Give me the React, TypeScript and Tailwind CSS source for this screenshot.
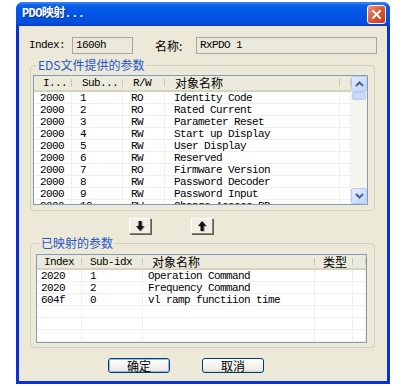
import React from "react";

const mono = "font-['Liberation_Mono',monospace] text-[11px] tracking-[-0.6px] text-black";
const cjk = "font-['Noto_Sans_CJK_SC',sans-serif] text-[12px]";

const rows1 = [
  ["2000", "1", "RO", "Identity Code"],
  ["2000", "2", "RO", "Rated Current"],
  ["2000", "3", "RW", "Parameter Reset"],
  ["2000", "4", "RW", "Start up Display"],
  ["2000", "5", "RW", "User Display"],
  ["2000", "6", "RW", "Reserved"],
  ["2000", "7", "RO", "Firmware Version"],
  ["2000", "8", "RW", "Password Decoder"],
  ["2000", "9", "RW", "Password Input"],
  ["2000", "10", "RW", "Change Access PD"],
];

const rows2 = [
  ["2020", "1", "Operation Command", ""],
  ["2020", "2", "Frequency Command", ""],
  ["604f", "0", "vl ramp functiion time", ""],
  ["", "", "", ""],
  ["", "", "", ""],
  ["", "", "", ""],
];

function HeadCell({ w, pl, children, cjkText }: { w: string; pl: string; children?: React.ReactNode; cjkText?: boolean }) {
  return (
    <div className={`${w} ${pl} h-full flex items-center relative shrink-0 overflow-hidden whitespace-nowrap`}>
      <span className={cjkText ? `${cjk} text-black leading-[14px]` : `${mono} leading-[14px]`}>{children}</span>
      <div className="absolute right-0 top-[3px] bottom-[3px] w-px bg-[#c9c6b4]" />
    </div>
  );
}

function Cell({ w, pl, children }: { w: string; pl: string; children?: React.ReactNode }) {
  return (
    <div className={`${w} ${pl} h-full flex items-center shrink-0 border-r border-[#f0efe9] overflow-hidden whitespace-nowrap`}>
      <span className={`${mono} leading-[12px]`}>{children}</span>
    </div>
  );
}

function Chevron({ up }: { up?: boolean }) {
  return (
    <svg width="9" height="6" viewBox="0 0 9 6">
      <path d={up ? "M1 5 L4.5 1.5 L8 5" : "M1 1 L4.5 4.5 L8 1"} fill="none" stroke="#4d6185" strokeWidth="2" />
    </svg>
  );
}

function ArrowBtn({ up }: { up?: boolean }) {
  return (
    <div className="w-[22px] h-[16px] bg-[#f1efe4] border border-t-white border-l-white border-r-[#8a887c] border-b-[#8a887c] shadow-[1px_1px_0_#5e5d55] flex items-center justify-center">
      <svg width="12" height="12" viewBox="0 0 12 12">
        {up ? (
          <>
            <path d="M6 1 L10 6 L7.5 6 L7.5 11 L4.5 11 L4.5 6 L2 6 Z" fill="#7c7b76" transform="translate(1 0.5)" />
            <path d="M6 1 L10 6 L7.5 6 L7.5 11 L4.5 11 L4.5 6 L2 6 Z" fill="#111" />
          </>
        ) : (
          <>
            <path d="M6 11 L10 6 L7.5 6 L7.5 1 L4.5 1 L4.5 6 L2 6 Z" fill="#7c7b76" transform="translate(1 0.5)" />
            <path d="M6 11 L10 6 L7.5 6 L7.5 1 L4.5 1 L4.5 6 L2 6 Z" fill="#111" />
          </>
        )}
      </svg>
    </div>
  );
}

function XpButton({ children, focused }: { children: React.ReactNode; focused?: boolean }) {
  return (
    <div className="w-[62px] h-[15px] rounded-[3px] border border-[#003c74] bg-[linear-gradient(#ffffff,#ecebe6_85%,#d6d0c5)] flex items-center justify-center">
      <div className={`w-full h-full rounded-[2px] flex items-center justify-center ${focused ? "shadow-[inset_0_0_0_1px_#9db9eb]" : ""}`}>
        <span className={`${cjk} text-black leading-[12px]`}>{children}</span>
      </div>
    </div>
  );
}

export default function App() {
  return (
    <div className="w-[411px] h-[386px] bg-white pt-[2px] pl-[16px] overflow-hidden">
      <div className="w-[374px] h-[382px] flex flex-col rounded-t-[7px] overflow-hidden bg-[#0831d9]">
        {/* Title bar */}
        <div className="h-[24px] shrink-0 flex items-center justify-between pl-[6px] pr-[4px] bg-[linear-gradient(#3c8cf7,#0a5fe8_15%,#0054e3_50%,#0450dc_85%,#0a3fc0)]">
          <span className="font-['Liberation_Mono','Noto_Sans_CJK_SC',monospace] font-bold text-[12px] tracking-[-0.6px] text-white [text-shadow:1px_1px_0_#0b2f8f]">
            PDO映射...
          </span>
          <div className="w-[19px] h-[19px] rounded-[3px] border border-white bg-[linear-gradient(135deg,#f0957a,#e2542f_50%,#c8391a)] flex items-center justify-center">
            <svg width="11" height="11" viewBox="0 0 11 11">
              <path d="M2 2 L9 9 M9 2 L2 9" stroke="white" strokeWidth="2" strokeLinecap="round" />
            </svg>
          </div>
        </div>
        {/* Body */}
        <div className="flex-1 mx-[3px] mb-[3px] bg-[#ece9d8] flex flex-col">
          {/* Index row */}
          <div className="flex items-center mt-[11px] ml-[10px] h-[17px]">
            <span className={`${mono} w-[43px]`}>Index:</span>
            <div className="w-[61px] h-[17px] border border-[#a9a79a] bg-[#ebe9dc] flex items-center pl-[3px]">
              <span className={mono}>1600h</span>
            </div>
            <span className={`${cjk} text-black ml-[22px] w-[41px] leading-[14px]`}>名称:</span>
            <div className="w-[181px] h-[17px] border border-[#a9a79a] bg-[#ebe9dc] flex items-center pl-[3px]">
              <span className={mono}>RxPDO 1</span>
            </div>
          </div>

          {/* Group 1 */}
          <fieldset className="ml-[11px] mt-[4px] w-[345px] border border-[#d0d0bf] rounded-[4px] pl-[2px] pb-[5px]">
            <legend className={`${cjk} text-[#1f55c8] leading-[14px] ml-[3px] px-[2px]`}>EDS文件提供的参数</legend>
            <div className="mt-[3px] w-[335px] h-[130px] border border-[#7f9db9] bg-white flex overflow-hidden">
              <div className="w-[317px] flex flex-col">
                <div className="h-[16px] shrink-0 flex bg-[#ebeadb] border-b-[2px] border-[#d6d2c2]">
                  <HeadCell w="w-[38px]" pl="pl-[9px]">I...</HeadCell>
                  <HeadCell w="w-[51px]" pl="pl-[10px]">Sub...</HeadCell>
                  <HeadCell w="w-[42px]" pl="pl-[10px]">R/W</HeadCell>
                  <HeadCell w="w-[175px]" pl="pl-[10px]" cjkText>对象名称</HeadCell>
                  <HeadCell w="w-[11px]" pl="pl-0" />
                </div>
                {rows1.map((r, i) => (
                  <div key={i} className="h-[12px] shrink-0 flex border-b border-[#f0efe9]">
                    <Cell w="w-[38px]" pl="pl-[6px]">{r[0]}</Cell>
                    <Cell w="w-[51px]" pl="pl-[8px]">{r[1]}</Cell>
                    <Cell w="w-[42px]" pl="pl-[8px]">{r[2]}</Cell>
                    <Cell w="w-[175px]" pl="pl-[9px]">{r[3]}</Cell>
                    <Cell w="w-[11px]" pl="pl-0" />
                  </div>
                ))}
              </div>
              {/* Scrollbar */}
              <div className="w-[16px] h-full flex flex-col bg-[#f6f5ef]">
                <div className="h-[16px] rounded-[2px] border border-[#b9cbf3] bg-[linear-gradient(135deg,#e4ecfe,#c1d3fb)] flex items-center justify-center">
                  <Chevron up />
                </div>
                <div className="h-[8px] mx-[1px] rounded-[2px] border border-[#b9cbf3] bg-[#cbdafc]" />
                <div className="flex-1" />
                <div className="h-[16px] rounded-[2px] border border-[#b9cbf3] bg-[linear-gradient(135deg,#e4ecfe,#c1d3fb)] flex items-center justify-center">
                  <Chevron />
                </div>
              </div>
            </div>
          </fieldset>

          {/* Arrow buttons */}
          <div className="flex mt-[7px] ml-[110px] gap-[40px]">
            <ArrowBtn />
            <ArrowBtn up />
          </div>

          {/* Group 2 */}
          <fieldset className="ml-[11px] mt-[2px] w-[345px] border border-[#d0d0bf] rounded-[4px] pl-[5px] pb-[4px]">
            <legend className={`${cjk} text-[#1f55c8] leading-[14px] ml-[3px] px-[2px]`}>已映射的参数</legend>
            <div className="mt-[4px] w-[331px] h-[89px] border border-[#7f9db9] bg-white flex flex-col overflow-hidden">
              <div className="h-[15px] shrink-0 flex bg-[#ebeadb] border-b-[2px] border-[#d6d2c2]">
                <HeadCell w="w-[45px]" pl="pl-[7px]">Index</HeadCell>
                <HeadCell w="w-[61px]" pl="pl-[8px]">Sub-idx</HeadCell>
                <HeadCell w="w-[172px]" pl="pl-[9px]" cjkText>对象名称</HeadCell>
                <HeadCell w="w-[38px]" pl="pl-[8px]" cjkText>类型</HeadCell>
                <HeadCell w="w-[13px]" pl="pl-0" />
              </div>
              {rows2.map((r, i) => (
                <div key={i} className="h-[12px] shrink-0 flex border-b border-[#f0efe9]">
                  <Cell w="w-[45px]" pl="pl-[4px]">{r[0]}</Cell>
                  <Cell w="w-[61px]" pl="pl-[8px]">{r[1]}</Cell>
                  <Cell w="w-[172px]" pl="pl-[5px]">{r[2]}</Cell>
                  <Cell w="w-[38px]" pl="pl-[4px]">{r[3]}</Cell>
                  <Cell w="w-[13px]" pl="pl-0" />
                </div>
              ))}
            </div>
          </fieldset>

          {/* Bottom buttons */}
          <div className="flex mt-[10px] ml-[89px] gap-[32px]">
            <XpButton focused>确定</XpButton>
            <XpButton>取消</XpButton>
          </div>
        </div>
      </div>
    </div>
  );
}
